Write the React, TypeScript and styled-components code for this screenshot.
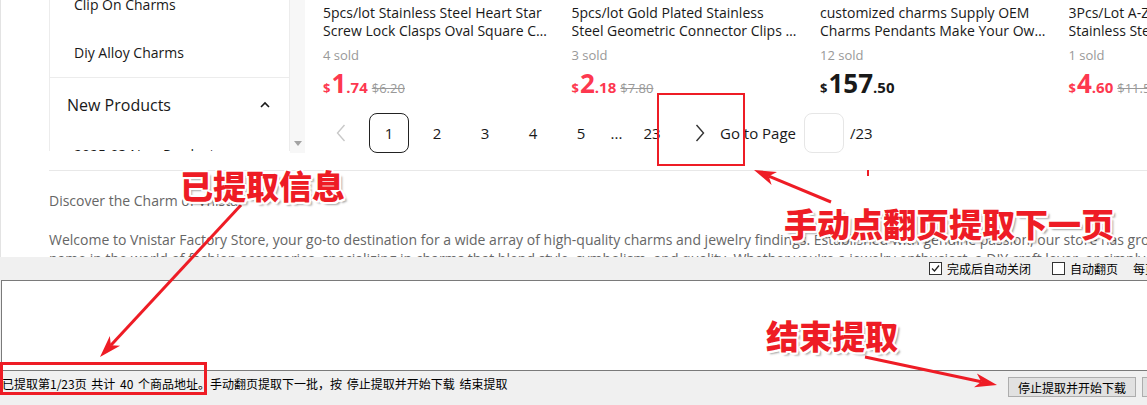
import React from "react";
import styled, { createGlobalStyle } from "styled-components";

const GlobalStyle = createGlobalStyle`
  html, body {
    margin: 0;
    padding: 0;
    background: #fff;
    overflow: hidden;
  }
`;

const RED = "#ee1c25";

const Screen = styled.div`
  position: relative;
  width: 1147px;
  height: 405px;
  overflow: hidden;
  display: flex;
  flex-direction: column;
  background: #f0f0f0;
`;

/* ---------- web page part ---------- */

const WebView = styled.div`
  flex: none;
  height: 257px;
  overflow: hidden;
  background: #fff;
  border-left: 1px solid #e3e3e3;
  font-family: "Open Sans", "Liberation Sans", sans-serif;
  color: #191919;
`;

const TopSection = styled.div`
  display: flex;
  align-items: flex-start;
  height: 170px;
  margin-left: 48px;
  border-bottom: 1px solid #e8e8e8;
`;

const Sidebar = styled.div`
  flex: none;
  width: 239px;
  height: 151px;
  overflow: hidden;
  border-left: 1px solid #ececec;
  border-right: 1px solid #ececec;
`;

const SideList = styled.div`
  margin-top: -19px;
`;

const SideItem = styled.div`
  height: 48px;
  line-height: 48px;
  padding-left: 24px;
  font-size: 14px;
  color: #191919;
  white-space: nowrap;
`;

const SideGroup = styled.div`
  display: flex;
  align-items: center;
  justify-content: space-between;
  height: 53px;
  padding: 0 19px 0 17px;
  border-top: 1px solid #ececec;
  font-size: 16px;
  color: #191919;
`;

const ScrollTrack = styled.div`
  flex: none;
  width: 15px;
  height: 153px;
  background: #f7f7f7;
  display: flex;
  align-items: flex-end;
  justify-content: center;
  padding-bottom: 7px;
  box-sizing: border-box;
`;

const ScrollArrow = styled.div`
  width: 0;
  height: 0;
  border-left: 4px solid transparent;
  border-right: 4px solid transparent;
  border-top: 5px solid #a3a3a3;
`;

const Main = styled.div`
  flex: none;
  margin-left: 18px;
  padding-top: 4px;
`;

const Grid = styled.div`
  display: grid;
  grid-template-columns: repeat(4, 230px);
  column-gap: 18.5px;
`;

const Card = styled.div`
  min-width: 0;
`;

const TitleLine = styled.div`
  max-width: 226px;
  font-size: 14px;
  line-height: 18px;
  color: #191919;
  white-space: nowrap;
  overflow: hidden;
  text-overflow: ellipsis;
`;

const Sold = styled.div`
  margin-top: 6px;
  font-size: 13px;
  line-height: 18px;
  color: #999;
`;

const PriceRow = styled.div<{ $dark?: boolean }>`
  display: flex;
  align-items: baseline;
  height: 30px;
  margin-top: 4px;
  font-weight: 700;
  color: ${(p) => (p.$dark ? "#191919" : "#fd384f")};
  white-space: nowrap;
`;

const Cur = styled.span`
  font-size: 13px;
  margin-right: 1px;
`;

const Int = styled.span`
  font-size: 26px;
  line-height: 30px;
`;

const Dec = styled.span`
  font-size: 15px;
`;

const OldPrice = styled.span`
  margin-left: 4px;
  font-size: 13px;
  font-weight: 400;
  color: #999;
  text-decoration: line-through;
`;

const Pager = styled.div`
  display: flex;
  align-items: center;
  gap: 8px;
  height: 40px;
  margin: 15px 0 0 -2px;
  font-size: 15px;
  color: #191919;
`;

const PageItem = styled.div<{ $active?: boolean; $narrow?: boolean }>`
  flex: none;
  width: ${(p) => (p.$narrow ? "15px" : "40px")};
  height: 40px;
  box-sizing: border-box;
  display: flex;
  align-items: center;
  justify-content: center;
  border: ${(p) => (p.$active ? "1px solid #222" : "none")};
  border-radius: 8px;
`;

const GoText = styled.span`
  margin-left: -8px;
  white-space: nowrap;
`;

const PageInput = styled.div`
  flex: none;
  width: 40px;
  height: 40px;
  box-sizing: border-box;
  border: 1px solid #e6e6e6;
  border-radius: 8px;
`;

const Total = styled.span`
  margin-left: -2px;
`;

const Desc = styled.div`
  margin-left: 48px;
  font-size: 14px;
  color: #666;
`;

const DescLine = styled.div<{ $gap: number }>`
  margin-top: ${(p) => p.$gap}px;
  line-height: 19px;
  white-space: nowrap;
`;

/* ---------- desktop app part ---------- */

const AppFont = `"Noto Sans CJK SC", "Microsoft YaHei", sans-serif`;

const OptionsBar = styled.div`
  flex: none;
  height: 23px;
  display: flex;
  align-items: center;
  padding-left: 929px;
  font-family: ${AppFont};
  font-size: 12px;
  color: #000;
  white-space: nowrap;
`;

const Option = styled.label`
  display: flex;
  align-items: center;
  gap: 5px;
  margin-right: 21px;
`;

const OptionLabel = styled.span`
  margin-left: -6px;
`;

const Box = styled.span`
  width: 13px;
  height: 13px;
  box-sizing: border-box;
  border: 1px solid #333;
  background: #fff;
  display: flex;
  align-items: center;
  justify-content: center;
`;

const LogArea = styled.div`
  flex: none;
  height: 91px;
  box-sizing: border-box;
  margin: 0 -5px 0 1px;
  border: 1px solid #7a7a7a;
  background: #fff;
`;

const StatusBar = styled.div`
  flex: 1;
  display: flex;
  align-items: flex-start;
  margin-right: -75px;
  font-family: ${AppFont};
  font-size: 12px;
  color: #000;
  white-space: nowrap;
`;

const StatusText = styled.div`
  margin: 4px 0 0 2px;
  line-height: 18px;
  word-spacing: 2px;
`;

const Buttons = styled.div`
  display: flex;
  gap: 6px;
  margin: 6px 0 0 auto;
`;

const Button = styled.div<{ $w: number }>`
  width: ${(p) => p.$w}px;
  height: 20px;
  box-sizing: border-box;
  border: 1px solid #adadad;
  background: #e1e1e1;
  display: flex;
  align-items: center;
  justify-content: center;
  font-size: 12px;
`;

/* ---------- annotations ---------- */

const Callout = styled.div<{ $x: number; $y: number }>`
  position: absolute;
  left: ${(p) => p.$x}px;
  top: ${(p) => p.$y}px;
  font-family: "Noto Sans CJK SC", sans-serif;
  font-weight: 900;
  font-size: 33px;
  line-height: 33px;
  color: ${RED};
  white-space: nowrap;
  text-shadow:
    2px 0 0 #fff, -2px 0 0 #fff, 0 2px 0 #fff, 0 -2px 0 #fff,
    1.5px 1.5px 0 #fff, -1.5px 1.5px 0 #fff, 1.5px -1.5px 0 #fff, -1.5px -1.5px 0 #fff,
    3px 3px 2px rgba(0, 0, 0, 0.35);
`;

const Frame = styled.div<{ $x: number; $y: number; $w: number; $h: number; $b: number }>`
  position: absolute;
  left: ${(p) => p.$x}px;
  top: ${(p) => p.$y}px;
  width: ${(p) => p.$w}px;
  height: ${(p) => p.$h}px;
  box-sizing: border-box;
  border: ${(p) => p.$b}px solid ${RED};
`;

const Overlay = styled.svg`
  position: absolute;
  left: 0;
  top: 0;
  pointer-events: none;
`;

type Arrow = { x1: number; y1: number; x2: number; y2: number };

const arrows: Arrow[] = [
  { x1: 241, y1: 205, x2: 100, y2: 357 },
  { x1: 831, y1: 202, x2: 754, y2: 170 },
  { x1: 865, y1: 357, x2: 997, y2: 385 },
];

const arrowShape = (a: Arrow) => {
  const dx = a.x2 - a.x1;
  const dy = a.y2 - a.y1;
  const len = Math.hypot(dx, dy);
  const ux = dx / len;
  const uy = dy / len;
  const px = -uy;
  const py = ux;
  const L = 22;
  const W = 7;
  const N = 16;
  const bx = a.x2 - ux * L;
  const by = a.y2 - uy * L;
  const nx = a.x2 - ux * N;
  const ny = a.y2 - uy * N;
  return {
    head: `${a.x2},${a.y2} ${bx + px * W},${by + py * W} ${nx},${ny} ${bx - px * W},${by - py * W}`,
    nx,
    ny,
  };
};

const products = [
  {
    l1: "5pcs/lot Stainless Steel Heart Star",
    l2: "Screw Lock Clasps Oval Square Connectors for Jewelry",
    sold: "4 sold",
    int: "1",
    dec: ".74",
    old: "$6.20",
  },
  {
    l1: "5pcs/lot Gold Plated Stainless",
    l2: "Steel Geometric Connector Clips Clasps",
    sold: "3 sold",
    int: "2",
    dec: ".18",
    old: "$7.80",
  },
  {
    l1: "customized charms Supply OEM",
    l2: "Charms Pendants Make Your Own Logo",
    sold: "12 sold",
    int: "157",
    dec: ".50",
    dark: true,
  },
  {
    l1: "3Pcs/Lot A-Z Letter Charms",
    l2: "Stainless Steel Initial Pendants",
    sold: "1 sold",
    int: "4",
    dec: ".60",
    old: "$11.50",
  },
];

const Chevron = ({ dir, color }: { dir: "left" | "right"; color: string }) => (
  <svg width="10" height="18" viewBox="0 0 10 18">
    <polyline
      points={dir === "left" ? "8.5,1 1.5,9 8.5,17" : "1.5,1 8.5,9 1.5,17"}
      fill="none"
      stroke={color}
      strokeWidth="1.4"
    />
  </svg>
);

const Check = () => (
  <svg width="11" height="11" viewBox="0 0 11 11">
    <polyline points="2,5.5 4.5,8 9,2.5" fill="none" stroke="#222" strokeWidth="1.3" />
  </svg>
);

const App = () => (
  <Screen>
    <GlobalStyle />
    <WebView>
      <TopSection>
        <Sidebar>
          <SideList>
            <SideItem>Clip On Charms</SideItem>
            <SideItem>Diy Alloy Charms</SideItem>
            <SideGroup>
              New Products
              <svg width="10" height="7" viewBox="0 0 10 7">
                <polyline points="1,6 5,2 9,6" fill="none" stroke="#191919" strokeWidth="1.6" />
              </svg>
            </SideGroup>
            <SideItem>2025-03 New Products</SideItem>
          </SideList>
        </Sidebar>
        <ScrollTrack>
          <ScrollArrow />
        </ScrollTrack>
        <Main>
          <Grid>
            {products.map((p) => (
              <Card key={p.l1}>
                <TitleLine>{p.l1}</TitleLine>
                <TitleLine>{p.l2}</TitleLine>
                <Sold>{p.sold}</Sold>
                <PriceRow $dark={p.dark}>
                  <Cur>$</Cur>
                  <Int>{p.int}</Int>
                  <Dec>{p.dec}</Dec>
                  {p.old && <OldPrice>{p.old}</OldPrice>}
                </PriceRow>
              </Card>
            ))}
          </Grid>
          <Pager>
            <PageItem>
              <Chevron dir="left" color="#c8c8c8" />
            </PageItem>
            <PageItem $active>1</PageItem>
            <PageItem>2</PageItem>
            <PageItem>3</PageItem>
            <PageItem>4</PageItem>
            <PageItem>5</PageItem>
            <PageItem $narrow>...</PageItem>
            <PageItem>23</PageItem>
            <PageItem>
              <Chevron dir="right" color="#333" />
            </PageItem>
            <GoText>Go to Page</GoText>
            <PageInput />
            <Total>/23</Total>
          </Pager>
        </Main>
      </TopSection>
      <Desc>
        <DescLine $gap={20}>Discover the Charm of Vnistar</DescLine>
        <DescLine $gap={20}>
          Welcome to Vnistar Factory Store, your go-to destination for a wide array of high-quality charms and
          jewelry findings. Established with genuine passion, our store has grown into a trusted
        </DescLine>
        <DescLine $gap={0}>
          name in the world of fashion accessories, specializing in charms that blend style, symbolism, and
          quality. Whether you're a jewelry enthusiast, a DIY craft lover, or simply
        </DescLine>
      </Desc>
    </WebView>

    <OptionsBar>
      <Option>
        <Box>
          <Check />
        </Box>
        完成后自动关闭
      </Option>
      <Option>
        <Box />
        自动翻页
      </Option>
      <OptionLabel>每页数量</OptionLabel>
    </OptionsBar>
    <LogArea />
    <StatusBar>
      <StatusText>已提取第1/23页 共计 40 个商品地址。手动翻页提取下一批，按 停止提取并开始下载 结束提取</StatusText>
      <Buttons>
        <Button $w={128}>停止提取并开始下载</Button>
        <Button $w={80}>关闭</Button>
      </Buttons>
    </StatusBar>

    <Frame $x={657} $y={93} $w={88} $h={73} $b={2} />
    <Frame $x={0} $y={362} $w={207} $h={33} $b={3} />
    <Overlay width="1147" height="405">
      <rect x="867" y="170" width="2" height="6" fill={RED} />
      {arrows.map((a) => {
        const s = arrowShape(a);
        return (
          <g key={`${a.x1}-${a.y1}`}>
            <line x1={a.x1} y1={a.y1} x2={s.nx} y2={s.ny} stroke={RED} strokeWidth="3" />
            <polygon points={s.head} fill={RED} />
          </g>
        );
      })}
    </Overlay>
    <Callout $x={180} $y={169}>已提取信息</Callout>
    <Callout $x={784} $y={207}>手动点翻页提取下一页</Callout>
    <Callout $x={766} $y={319}>结束提取</Callout>
  </Screen>
);

export default App;
